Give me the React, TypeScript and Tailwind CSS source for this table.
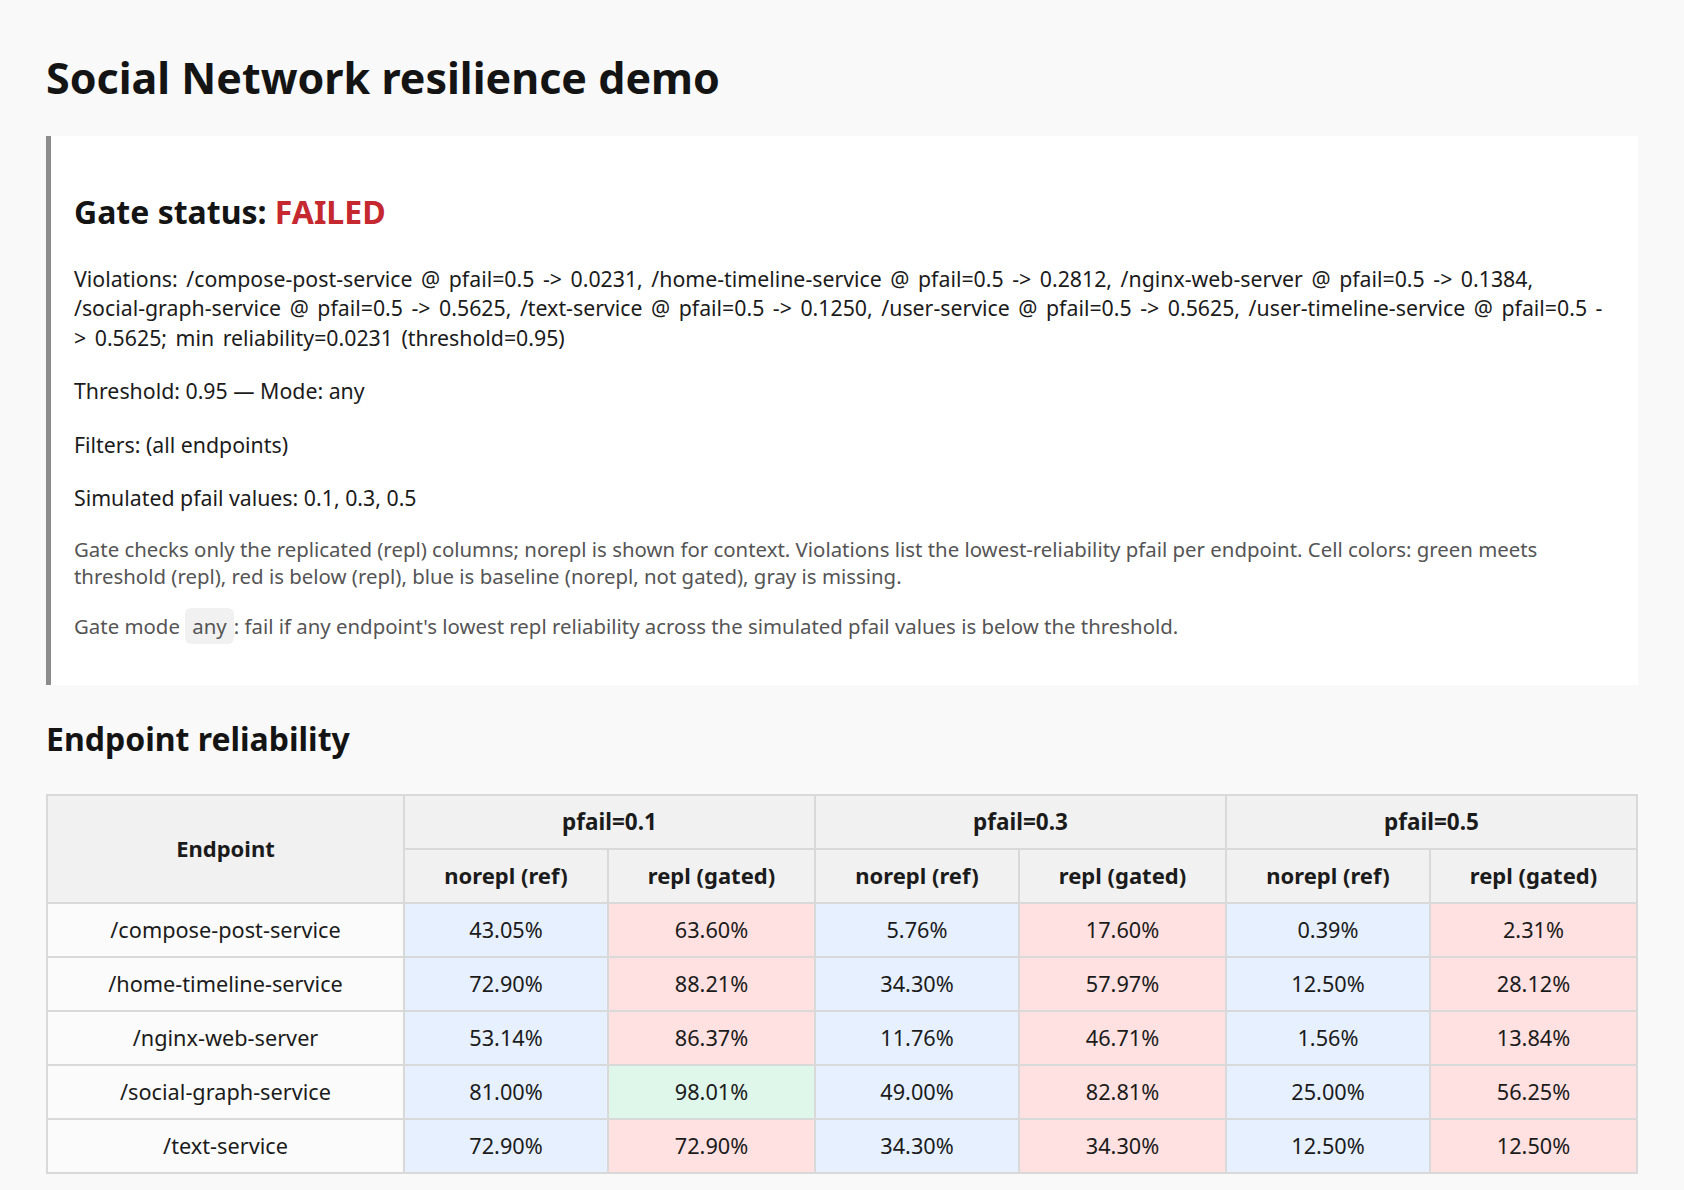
import React from "react";

type Row = { ep: string; vals: { v: string; k: "b" | "r" | "g" }[] };

const mk = (ep: string, a: string[], green: number[] = []): Row => ({
  ep,
  vals: a.map((v, i) => ({
    v,
    k: i % 2 === 0 ? "b" : green.includes(i) ? "g" : "r",
  })),
});

const rows: Row[] = [
  mk("/compose-post-service", ["43.05%", "63.60%", "5.76%", "17.60%", "0.39%", "2.31%"]),
  mk("/home-timeline-service", ["72.90%", "88.21%", "34.30%", "57.97%", "12.50%", "28.12%"]),
  mk("/nginx-web-server", ["53.14%", "86.37%", "11.76%", "46.71%", "1.56%", "13.84%"]),
  mk("/social-graph-service", ["81.00%", "98.01%", "49.00%", "82.81%", "25.00%", "56.25%"], [1]),
  mk("/text-service", ["72.90%", "72.90%", "34.30%", "34.30%", "12.50%", "12.50%"]),
];

const bg = {
  b: "bg-[#e6f0ff]",
  r: "bg-[#ffe1e1]",
  g: "bg-[#dff6eb]",
};

export default function App() {
  return (
    <div className="min-h-screen bg-[#f9f9f9] px-[46px] pt-[49px] pb-[40px] text-[#1b1b1b] font-['Noto_Sans',sans-serif]">
      <h1 className="m-0 text-[43px] font-bold leading-[58px] text-[#141414]">
        Social Network resilience demo
      </h1>

      <div className="mt-[29px] border-l-[5px] border-[#8c8c8c] bg-white pl-[23px] pr-[18px] pt-[56px] pb-[45px]">
        <h2 className="m-0 text-[32px] font-bold leading-[40px] text-[#141414]">
          Gate status: <span className="text-[#c5282f]">FAILED</span>
        </h2>
        <p className="mt-[32px] text-[21.3px] leading-[29.4px] [word-spacing:3px]">
          Violations: /compose-post-service @ pfail=0.5 -&gt; 0.0231, /home-timeline-service @ pfail=0.5 -&gt; 0.2812,
          /nginx-web-server @ pfail=0.5 -&gt; 0.1384,
          <br />
          /social-graph-service @ pfail=0.5 -&gt; 0.5625, /text-service @ pfail=0.5 -&gt; 0.1250, /user-service @
          pfail=0.5 -&gt; 0.5625, /user-timeline-service @ pfail=0.5 -
          <br />
          &gt; 0.5625; min reliability=0.0231 (threshold=0.95)
        </p>
        <p className="mt-[24px] text-[21.3px] leading-[29.4px]">Threshold: 0.95 — Mode: any</p>
        <p className="mt-[24px] text-[21.3px] leading-[29.4px]">Filters: (all endpoints)</p>
        <p className="mt-[24px] text-[21.3px] leading-[29.4px]">Simulated pfail values: 0.1, 0.3, 0.5</p>
        <p className="mt-[24px] text-[20.4px] leading-[26.5px] text-[#555555]">
          Gate checks only the replicated (repl) columns; norepl is shown for context. Violations list the
          lowest-reliability pfail per endpoint. Cell colors: green meets
          <br />
          threshold (repl), red is below (repl), blue is baseline (norepl, not gated), gray is missing.
        </p>
        <p className="mt-[24px] text-[20.4px] leading-[26.5px] text-[#555555]">
          Gate mode{" "}
          <code className="rounded-[6px] bg-[#f1f1f1] px-[7px] py-[4px] font-['Noto_Sans',sans-serif] text-[20.4px]">
            any
          </code>
          : fail if any endpoint's lowest repl reliability across the simulated pfail values is below the threshold.
        </p>
      </div>

      <h2 className="mt-[34px] text-[32px] font-bold leading-[40px] text-[#141414]">Endpoint reliability</h2>

      <table className="mt-[35px] w-full table-fixed border-collapse text-[21.7px]">
        <colgroup>
          <col className="w-[357px]" />
          <col className="w-[204px]" />
          <col />
          <col className="w-[204px]" />
          <col />
          <col className="w-[204px]" />
          <col />
        </colgroup>
        <thead>
          <tr className="h-[54px]">
            <th rowSpan={2} className="border-2 border-[#d9d9d9] bg-[#f1f1f1] text-[22px] font-bold">
              Endpoint
            </th>
            <th colSpan={2} className="border-2 border-[#d9d9d9] bg-[#f1f1f1] text-[22.5px] font-bold">
              pfail=0.1
            </th>
            <th colSpan={2} className="border-2 border-[#d9d9d9] bg-[#f1f1f1] text-[22.5px] font-bold">
              pfail=0.3
            </th>
            <th colSpan={2} className="border-2 border-[#d9d9d9] bg-[#f1f1f1] text-[22.5px] font-bold">
              pfail=0.5
            </th>
          </tr>
          <tr className="h-[54px]">
            {[0, 1, 2].map((i) => (
              <React.Fragment key={i}>
                <th className="border-2 border-[#d9d9d9] bg-[#f1f1f1] text-[22px] font-bold">norepl (ref)</th>
                <th className="border-2 border-[#d9d9d9] bg-[#f1f1f1] text-[22px] font-bold">repl (gated)</th>
              </React.Fragment>
            ))}
          </tr>
        </thead>
        <tbody>
          {rows.map((r) => (
            <tr key={r.ep} className="h-[54px]">
              <td className="border-2 border-[#d9d9d9] bg-[#fbfbfb] text-center">{r.ep}</td>
              {r.vals.map((c, i) => (
                <td key={i} className={`border-2 border-[#d9d9d9] text-center ${bg[c.k]}`}>
                  {c.v}
                </td>
              ))}
            </tr>
          ))}
        </tbody>
      </table>
    </div>
  );
}
